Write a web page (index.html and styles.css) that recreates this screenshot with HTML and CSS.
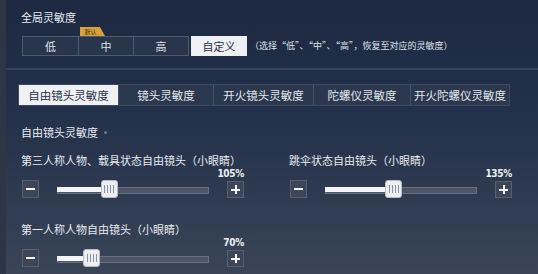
FILE: index.html
```html
<!DOCTYPE html>
<html>
<head>
<meta charset="utf-8">
<link rel="stylesheet" href="styles.css">
</head>
<body>
<div class="page">
  <section class="global">
    <div class="title">全局灵敏度</div>
    <div class="seg-row">
      <div class="seg-group">
        <div class="seg">低</div>
        <div class="seg seg-mid">中<span class="badge">默认</span></div>
        <div class="seg">高</div>
      </div>
      <div class="seg seg-on">自定义</div>
      <div class="hint">（选择“低”、“中”、“高”，恢复至对应的灵敏度）</div>
    </div>
  </section>
  <div class="divider"></div>
  <nav class="tabs">
    <div class="tab tab-on">自由镜头灵敏度</div>
    <div class="tab">镜头灵敏度</div>
    <div class="tab">开火镜头灵敏度</div>
    <div class="tab">陀螺仪灵敏度</div>
    <div class="tab">开火陀螺仪灵敏度</div>
  </nav>
  <div class="section-title">自由镜头灵敏度<span class="dot"></span></div>
  <div class="sliders">
    <div class="slider">
      <div class="label">第三人称人物、载具状态自由镜头（小眼睛）</div>
      <div class="ctrl">
        <div class="btn minus"></div>
        <div class="track"><div class="fill" style="width:34%"></div><div class="thumb" style="left:34%"><i></i><i></i><i></i><i></i></div></div>
        <div class="plus-col"><div class="pct">105%</div><div class="btn plus"></div></div>
      </div>
    </div>
    <div class="slider">
      <div class="label">跳伞状态自由镜头（小眼睛）</div>
      <div class="ctrl">
        <div class="btn minus"></div>
        <div class="track"><div class="fill" style="width:45%"></div><div class="thumb" style="left:45%"><i></i><i></i><i></i><i></i></div></div>
        <div class="plus-col"><div class="pct">135%</div><div class="btn plus"></div></div>
      </div>
    </div>
    <div class="slider row2">
      <div class="label">第一人称人物自由镜头（小眼睛）</div>
      <div class="ctrl">
        <div class="btn minus"></div>
        <div class="track"><div class="fill" style="width:22.5%"></div><div class="thumb" style="left:22.5%"><i></i><i></i><i></i><i></i></div></div>
        <div class="plus-col"><div class="pct">70%</div><div class="btn plus"></div></div>
      </div>
    </div>
  </div>
</div>
</body>
</html>
```

FILE: styles.css
```css
* { box-sizing: border-box; }
html, body { margin: 0; padding: 0; }
body {
  width: 538px;
  height: 274px;
  overflow: hidden;
  font-family: "Noto Sans CJK SC", "Noto Sans", sans-serif;
  color: #e9edf2;
}
.page {
  width: 538px;
  height: 274px;
  background: linear-gradient(180deg, #1d2941 0%, #223049 40%, #2d3a50 70%, #3a4557 100%);
  border-left: 6px solid #2c3647;
}
.global { padding: 10px 0 0 15px; }
.title { font-size: 11px; line-height: 14px; color: #e6eaef; }
.seg-row { display: flex; align-items: center; margin-top: 12px; margin-left: 1px; }
.seg-group {
  display: flex;
  border: 1px solid #4e5a6d;
  background: #28354b;
}
.seg {
  width: 56px;
  height: 20px;
  font-size: 11px;
  line-height: 18px;
  text-align: center;
  color: #dfe4ea;
  position: relative;
}
.seg-group .seg + .seg { border-left: 1px solid #4e5a6d; }
.seg-group .seg { height: 18px; width: 55px; }
.seg-on {
  margin-left: 2px;
  background: #eef0f3;
  color: #2a3142;
  line-height: 20px;
}
.badge {
  position: absolute;
  left: 1px;
  top: -10px;
  width: 25px;
  height: 9px;
  background: #d7a23c;
  color: #3a2a10;
  font-size: 6px;
  line-height: 9px;
  text-align: center;
  clip-path: polygon(0 0, 80% 0, 100% 100%, 0 100%);
  padding-right: 4px;
}
.hint { font-size: 9px; line-height: 20px; margin-left: 3px; color: #dfe4ea; white-space: nowrap; }
.divider { margin-top: 12px; height: 2px; background: rgba(120, 140, 170, 0.25); }
.tabs {
  display: flex;
  margin: 14px 0 0 12px;
  width: 492px;
  height: 22px;
  background: #2b384e;
  border: 1px solid #3d4a5e;
}
.tab {
  flex: 1 1 auto;
  font-size: 11.5px;
  line-height: 20px;
  text-align: center;
  color: #e3e8ee;
  border-left: 1px solid #45526a;
}
.tab:first-child { border-left: none; }
.tab-on { background: #eef0f3; color: #2a3142; flex: 0 0 99px; }
.tab:nth-child(2) { flex: 0 0 95px; }
.tab:nth-child(3) { flex: 0 0 100px; }
.tab:nth-child(4) { flex: 0 0 97px; }
.section-title {
  margin: 19px 0 0 15px;
  font-size: 11px;
  line-height: 14px;
  display: flex;
  align-items: center;
}
.dot { width: 3px; height: 3px; border-radius: 50%; background: #6d7888; margin-left: 6px; }
.sliders {
  display: grid;
  grid-template-columns: 268px 240px;
  column-gap: 0;
  row-gap: 24px;
  margin: 14px 0 0 15px;
}
.label { font-size: 11px; line-height: 14px; white-space: nowrap; color: #e6eaef; }
.ctrl { display: flex; align-items: flex-end; margin-top: 2px; margin-left: 1px; }
.btn {
  width: 17px;
  height: 18px;
  background: #3d4656;
  border: 1px solid #556073;
  position: relative;
  flex: 0 0 17px;
}
.btn::before, .plus::after {
  content: "";
  position: absolute;
  background: #f2f4f6;
}
.btn::before { left: 3px; right: 3px; top: 7px; height: 2px; }
.plus::after { top: 3px; bottom: 3px; left: 6.5px; width: 2px; }
.track {
  position: relative;
  width: 152px;
  flex: 0 0 152px;
  height: 18px;
  margin: 0 18px 0 18px;
}
.track::before {
  content: "";
  position: absolute;
  left: 0; right: 0; top: 7px; height: 5px;
  background: #4d5566;
  border: 1px solid #667083;
}
.fill {
  position: absolute;
  left: 0; top: 7px; height: 5px;
  background: #f4f5f7;
}
.thumb {
  position: absolute;
  top: 0;
  width: 17px;
  height: 18px;
  margin-left: -8px;
  background: #eceef1;
  border: 1px solid #b7bdc6;
  border-radius: 3px;
  display: flex;
  justify-content: center;
  align-items: center;
  gap: 2px;
}
.thumb i { display: block; width: 1px; height: 8px; background: #8a93a1; }
.plus-col { display: flex; flex-direction: column; width: 17px; flex: 0 0 17px; }
.pct {
  width: 30px;
  margin-left: -13px;
  text-align: right;
  font-size: 10px;
  line-height: 10px;
  margin-bottom: 2px;
  font-weight: bold;
  font-family: "DejaVu Sans Condensed", "Liberation Sans", sans-serif;
  letter-spacing: -0.3px;
  color: #eef1f4;
  white-space: nowrap;
}
```
